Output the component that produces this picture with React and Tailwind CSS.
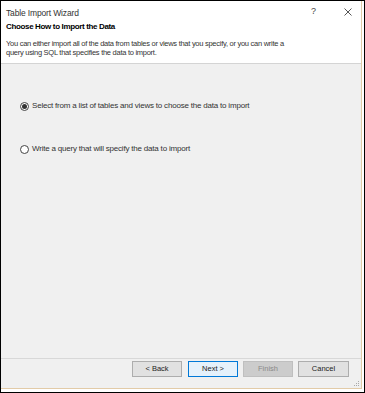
export default function App() {
  const font = { fontFamily: '"Liberation Sans", Arial, sans-serif' };
  return (
    <div
      className="w-[365px] h-[393px] border border-black bg-white flex flex-col text-[#1a1a1a] overflow-hidden"
      style={font}
    >
      <div className="flex-1 flex flex-col mr-[2px] mb-[3px] border-r border-b border-[#e2cba8] bg-white">
        {/* header */}
        <div className="h-[63px] border-b border-[#d4d4d4] bg-white flex flex-col pl-[5px]">
          <div className="h-[19px] flex items-end relative">
            <span className="text-[8.5px] leading-none tracking-[-0.15px] text-[#333] pb-[3px]">Table Import Wizard</span>
            <span className="absolute left-[305px] top-[6px] text-[9px] leading-none text-[#444]">?</span>
            <svg className="absolute left-[338px] top-[7px]" width="8" height="8" viewBox="0 0 8 8">
              <path d="M0.5 0.5L7.5 7.5M7.5 0.5L0.5 7.5" stroke="#555" strokeWidth="1" />
            </svg>
          </div>
          <div className="mt-[3px] text-[8px] leading-none font-bold tracking-[-0.35px] text-black">
            Choose How to Import the Data
          </div>
          <div className="mt-[8px] text-[7.5px] leading-[9px] tracking-[-0.27px] text-[#333]">
            <div>You can either import all of the data from tables or views that you specify, or you can write a</div>
            <div>query using SQL that specifies the data to import.</div>
          </div>
        </div>
        {/* body */}
        <div className="flex-1 bg-[#f0f0f0] flex flex-col pl-[19px] pt-[37px]">
          <label className="flex items-center gap-[3px] h-[10px]">
            <span className="w-[9px] h-[9px] rounded-full border border-[#444] bg-white flex items-center justify-center">
              <span className="w-[5px] h-[5px] rounded-full bg-[#333]" />
            </span>
            <span className="text-[8px] leading-none tracking-[-0.2px] text-[#333]">
              Select from a list of tables and views to choose the data to import
            </span>
          </label>
          <label className="flex items-center gap-[3px] h-[10px] mt-[33px]">
            <span className="w-[9px] h-[9px] rounded-full border border-[#444] bg-white" />
            <span className="text-[8px] leading-none tracking-[-0.2px] text-[#333]">
              Write a query that will specify the data to import
            </span>
          </label>
        </div>
        {/* footer */}
        <div className="h-[30px] bg-[#f0f0f0] border-t border-[#d8d8d8] relative flex justify-end items-start pt-[2px] pr-[12px] gap-[5px]">
          <button className="w-[50px] h-[16px] border border-[#adadad] bg-[#e1e1e1] text-[7.5px] leading-none text-[#222] mr-[1px]" style={font}>
            &lt; Back
          </button>
          <button className="w-[50px] h-[16px] border border-[#0078d7] bg-[#e5f1fb] text-[7.5px] leading-none text-[#222]" style={font}>
            Next &gt;
          </button>
          <button className="w-[50px] h-[16px] border border-[#bfbfbf] bg-[#cccccc] text-[7.5px] leading-none text-[#8a8a8a]" style={font}>
            Finish
          </button>
          <button className="w-[51px] h-[16px] border border-[#adadad] bg-[#e1e1e1] text-[7.5px] leading-none text-[#222]" style={font}>
            Cancel
          </button>
          <svg className="absolute right-[1px] bottom-[1px]" width="6" height="6" viewBox="0 0 6 6">
            <rect x="4" y="0" width="1" height="1" fill="#aaa" />
            <rect x="2" y="2" width="1" height="1" fill="#aaa" />
            <rect x="4" y="2" width="1" height="1" fill="#aaa" />
            <rect x="0" y="4" width="1" height="1" fill="#aaa" />
            <rect x="2" y="4" width="1" height="1" fill="#aaa" />
            <rect x="4" y="4" width="1" height="1" fill="#aaa" />
          </svg>
        </div>
      </div>
    </div>
  );
}
